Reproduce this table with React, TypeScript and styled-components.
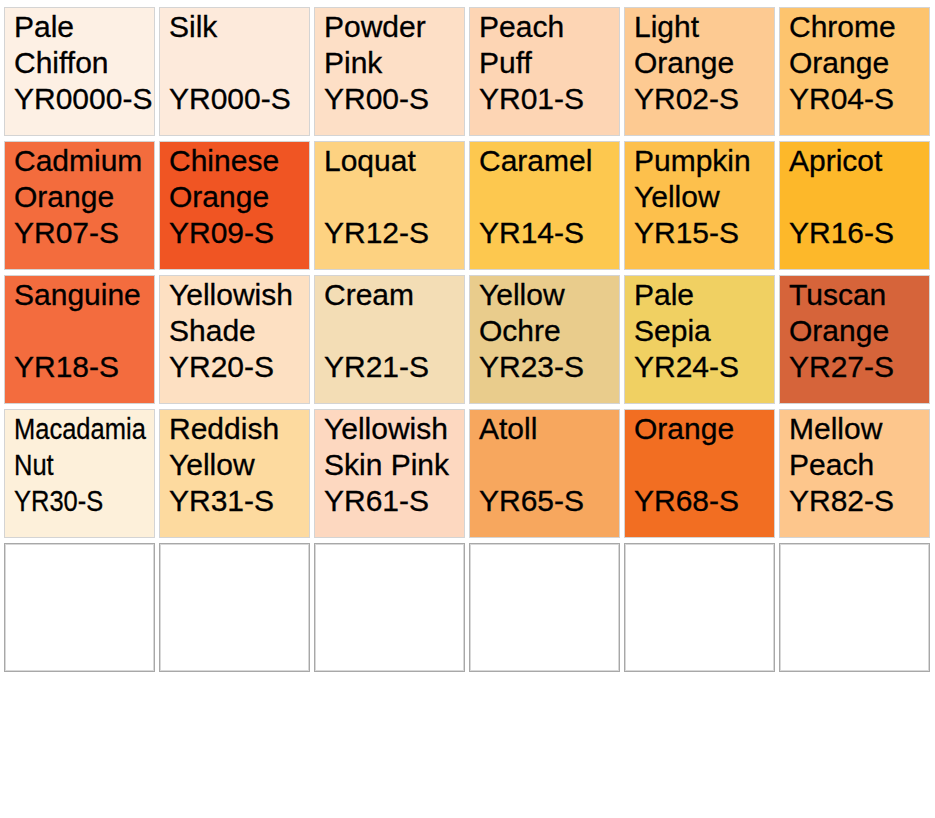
import { styled, createGlobalStyle } from 'styled-components';

const GlobalStyle = createGlobalStyle`
  html, body {
    margin: 0;
    padding: 0;
    background: #ffffff;
  }
`;

type Swatch = {
  name: string[];
  code: string;
  color: string;
  condensed?: boolean;
};

const SWATCHES: Swatch[] = [
  { name: ['Pale', 'Chiffon'], code: 'YR0000-S', color: '#fdf0e4' },
  { name: ['Silk'], code: 'YR000-S', color: '#fdeadb' },
  { name: ['Powder', 'Pink'], code: 'YR00-S', color: '#fddfc6' },
  { name: ['Peach', 'Puff'], code: 'YR01-S', color: '#fdd5b4' },
  { name: ['Light', 'Orange'], code: 'YR02-S', color: '#fdca92' },
  { name: ['Chrome', 'Orange'], code: 'YR04-S', color: '#fdc46e' },

  { name: ['Cadmium', 'Orange'], code: 'YR07-S', color: '#f36c3d' },
  { name: ['Chinese', 'Orange'], code: 'YR09-S', color: '#f05523' },
  { name: ['Loquat'], code: 'YR12-S', color: '#fdd281' },
  { name: ['Caramel'], code: 'YR14-S', color: '#fdc84f' },
  { name: ['Pumpkin', 'Yellow'], code: 'YR15-S', color: '#fdc04c' },
  { name: ['Apricot'], code: 'YR16-S', color: '#fdb82a' },

  { name: ['Sanguine'], code: 'YR18-S', color: '#f36c3e' },
  { name: ['Yellowish', 'Shade'], code: 'YR20-S', color: '#fde0c2' },
  { name: ['Cream'], code: 'YR21-S', color: '#f3ddb5' },
  { name: ['Yellow', 'Ochre'], code: 'YR23-S', color: '#e9cc8c' },
  { name: ['Pale', 'Sepia'], code: 'YR24-S', color: '#f0d062' },
  { name: ['Tuscan', 'Orange'], code: 'YR27-S', color: '#d6643a' },

  { name: ['Macadamia', 'Nut'], code: 'YR30-S', color: '#fdf0da', condensed: true },
  { name: ['Reddish', 'Yellow'], code: 'YR31-S', color: '#fdda9f' },
  { name: ['Yellowish', 'Skin Pink'], code: 'YR61-S', color: '#fdd8c0' },
  { name: ['Atoll'], code: 'YR65-S', color: '#f7a75e' },
  { name: ['Orange'], code: 'YR68-S', color: '#f26e22' },
  { name: ['Mellow', 'Peach'], code: 'YR82-S', color: '#fdc68c' },
];

const EMPTY_COUNT = 6;

const App = () => {
  return (
    <>
      <GlobalStyle />
      <St.Page>
        <St.Grid>
          {SWATCHES.map((swatch) => (
            <St.Cell key={swatch.code} $color={swatch.color}>
              <St.Label $condensed={swatch.condensed}>
                <St.Line>{swatch.name[0]}</St.Line>
                <St.Line>{swatch.name[1] ?? '\u00a0'}</St.Line>
                <St.Line>{swatch.code}</St.Line>
              </St.Label>
            </St.Cell>
          ))}
          {Array.from({ length: EMPTY_COUNT }).map((_, i) => (
            <St.EmptyCell key={`empty-${i}`} />
          ))}
        </St.Grid>
      </St.Page>
    </>
  );
};

export default App;

const St = {
  Page: styled.div`
    width: 935px;
    height: 818px;
    padding: 7px 0 0 4px;
    box-sizing: border-box;
    background: #ffffff;
  `,

  Grid: styled.div`
    display: grid;
    grid-template-columns: repeat(6, 151px);
    grid-auto-rows: 129px;
    column-gap: 4px;
    row-gap: 5px;
  `,

  Cell: styled.div<{ $color: string }>`
    box-sizing: border-box;
    overflow: hidden;
    padding: 1px 0 0 9px;

    border: 1px solid #d4d4d4;
    background-color: ${({ $color }) => $color};
  `,

  EmptyCell: styled.div`
    box-sizing: border-box;

    border: 1px solid #a8a8a8;
    box-shadow: inset 0 0 0 1px #d8d8d8;
    background-color: #ffffff;
  `,

  Label: styled.div<{ $condensed?: boolean }>`
    color: #000000;
    font-family: 'Liberation Sans', Arial, sans-serif;
    font-size: 30px;
    line-height: 36px;
    white-space: nowrap;
    -webkit-text-stroke: 0.3px #000000;

    transform-origin: left top;
    transform: ${({ $condensed }) => ($condensed ? 'scaleX(0.85)' : 'none')};
  `,

  Line: styled.div`
    height: 36px;
  `,
};
